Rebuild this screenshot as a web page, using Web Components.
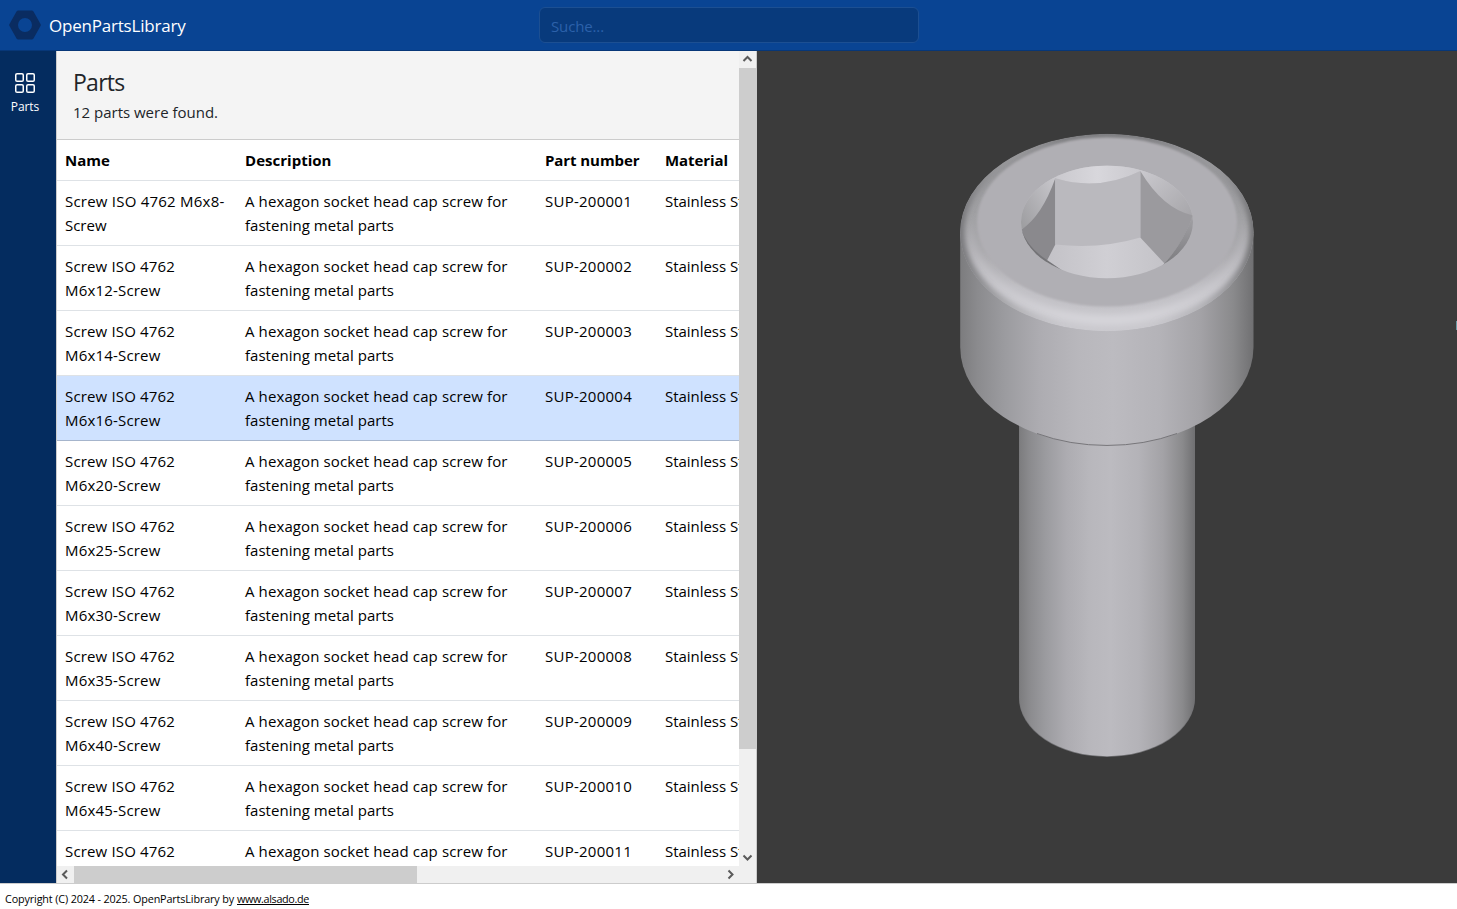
<!DOCTYPE html>
<html lang="en">
<head>
<meta charset="utf-8">
<title>OpenPartsLibrary</title>
<style>
html,body{margin:0;height:100%;overflow:hidden}
body{font-family:"Open Sans","Noto Sans",sans-serif;font-size:15px;line-height:24px;color:#000;background:#fff}
</style>
</head>
<body>
<opl-app></opl-app>
<script>
const define = (name, html, setup) => customElements.define(name, class extends HTMLElement {
  connectedCallback() {
    if (this.shadowRoot) return;
    this.attachShadow({mode: 'open'}).innerHTML = typeof html === 'function' ? html(this) : html;
    if (setup) setup(this);
  }
});

/* One line of text, tracked so that it is exactly `w` pixels wide. */
define('opl-line', '<style>:host{display:block;white-space:nowrap;width:max-content}span{display:inline-block;text-decoration:inherit}</style><span><slot></slot></span>', el => {
  const span = el.shadowRoot.querySelector('span');
  const n = el.textContent.length;
  const natural = span.getBoundingClientRect().width;
  span.style.letterSpacing = ((+el.getAttribute('w') - natural) / n).toFixed(3) + 'px';
});

define('opl-header', `<style>
:host{display:grid;grid-template-columns:539px 380px 1fr;align-items:center;height:51px;box-sizing:border-box;background:#094493;border-bottom:1px solid #073778;color:#fff}
.brand{display:flex;align-items:center;gap:8px;padding-left:9px;font-size:17px}
.brand opl-line{padding-top:2px}
svg{display:block}
.search{height:36px;box-sizing:border-box;border:1px solid #1c4f92;border-radius:6px;background:#083a7c;color:#2c61aa;padding:6px 11px 4px}
</style>
<div class="brand"><svg width="32" height="30" viewBox="0 0 32 30"><path fill="#0a2c61" fill-rule="evenodd" d="M9.3.6h13.4q1.2 0 1.8 1l7 12.4q.6 1 0 2l-7 12.4q-.6 1-1.8 1H9.3q-1.2 0-1.8-1L.5 16q-.6-1 0-2l7-12.4q.6-1 1.8-1zM16 8a7 7 0 1 0 0 14 7 7 0 0 0 0-14z"/></svg><opl-line w="136.5">OpenPartsLibrary</opl-line></div>
<div class="search"><opl-line w="53">Suche...</opl-line></div>`);

define('opl-nav', `<style>
:host{display:flex;flex-direction:column;align-items:center;background:#042c5f;color:#fff;padding:22px 6px 0 0;box-sizing:border-box;width:56px;font-size:12px;line-height:18px;gap:5px}
svg{display:block}
</style>
<svg width="20" height="20" viewBox="0 0 20 20" fill="none" stroke="#fff" stroke-width="1.5"><rect x=".75" y=".75" width="7.5" height="7.5" rx="1.3"/><rect x="11.75" y=".75" width="7.5" height="7.5" rx="1.3"/><rect x=".75" y="11.75" width="7.5" height="7.5" rx="1.3"/><rect x="11.75" y="11.75" width="7.5" height="7.5" rx="1.3"/></svg>
<opl-line w="28.5">Parts</opl-line>`);

define('opl-row', el => {
  const [a, wa, b, wb, num] = el.getAttribute('data').split('|');
  return `<style>
:host{display:grid;grid-template-columns:180px 300px 120px 150px;height:65px;box-sizing:border-box;border-bottom:1px solid #dee2e6;padding-top:8px;width:750px}
:host([selected]){background:#cfe2ff;border-bottom-color:#a6b5cc}
div{padding-left:8px}
</style>
<div><opl-line w="${wa}">${a}</opl-line><opl-line w="${wb}">${b}</opl-line></div>
<div><opl-line w="262.5">A hexagon socket head cap screw for</opl-line><opl-line w="149">fastening metal parts</opl-line></div>
<div><opl-line w="87">${num}</opl-line></div><div><opl-line w="99">Stainless Steel</opl-line></div>`;
});

define('opl-scrollbar', `<style>
:host{display:flex;background:#f0f0f0}
:host([vertical]){flex-direction:column}
.b{width:17px;height:17px;flex:none}
svg{display:block}
.t{background:#cdcdcd;flex:none}
.s{flex:1}
</style><div class="b"></div><div class="t"></div><div class="s"></div><div class="b"></div>`, el => {
  const v = el.hasAttribute('vertical'), r = el.shadowRoot;
  const t = r.querySelector('.t');
  t.style.width = v ? '17px' : el.getAttribute('thumb') + 'px';
  t.style.height = v ? el.getAttribute('thumb') + 'px' : '17px';
  const paths = v ? ['M4.5 10 8.5 6l4 4', 'M4.5 6.5l4 4 4-4'] : ['M10 4.5l-4 4 4 4', 'M6.500 4.500l4 4-4 4'];
  r.querySelectorAll('.b').forEach((b, i) => b.innerHTML = `<svg width="17" height="17" fill="none" stroke="#5a5a5a" stroke-width="2"><path d="${paths[i]}"/></svg>`);
});

define('opl-parts', el => {
  const sizes = ['8','12','14','16','20','25','30','35','40','45','50'];
  const rows = sizes.map((s, i) => {
    const num = 'SUP-2000' + String(i + 1).padStart(2, '0');
    const d = i === 0 ? `Screw ISO 4762 M6x8-|159.5|Screw|41.5|${num}` : `Screw ISO 4762|110|M6x${s}-Screw|95.5|${num}`;
    return `<opl-row data="${d}"${i === 3 ? ' selected' : ''}></opl-row>`;
  }).join('');
  return `<style>
:host{display:grid;grid-template-columns:682px 17px;grid-template-rows:815px 17px;border-left:1px solid #ccc;border-right:1px solid #ccc;box-sizing:border-box;width:701px;background:#f0f0f0}
.view{overflow:hidden;background:#fff;min-width:0}
.head{height:89px;box-sizing:border-box;background:#f4f4f4;border-bottom:1px solid #ccc;padding:16px 16px 0;color:#212529}
.title{font-size:23px;line-height:30px;margin-bottom:3px}
.cols{display:grid;grid-template-columns:180px 300px 120px 150px;width:750px;height:41px;box-sizing:border-box;padding-top:8px;border-bottom:1px solid #dee2e6;font-weight:700}
.cols opl-line{padding-left:8px}
</style>
<div class="view">
<div class="head"><div class="title"><opl-line w="51.500">Parts</opl-line></div><opl-line w="145">12 parts were found.</opl-line></div>
<div class="cols"><opl-line w="45">Name</opl-line><opl-line w="86.500">Description</opl-line><opl-line w="94.500">Part number</opl-line><opl-line w="63">Material</opl-line></div>
${rows}</div>
<opl-scrollbar vertical thumb="681"></opl-scrollbar>
<opl-scrollbar thumb="343"></opl-scrollbar>`;
});

define('opl-viewer', `<style>
:host{display:block;background:#3b3b3b;overflow:hidden}
svg{display:block}
</style>
<svg width="700" height="832" viewBox="757 51 700 832">
<defs>
<linearGradient id="cyl"><stop offset="0" stop-color="#7c7c7e"/><stop offset=".06" stop-color="#8b8b8e"/><stop offset=".15" stop-color="#9b9b9f"/><stop offset=".27" stop-color="#adacb1"/><stop offset=".4" stop-color="#b8b7bc"/><stop offset=".52" stop-color="#bcbbc0"/><stop offset=".68" stop-color="#b4b3b8"/><stop offset=".82" stop-color="#a3a2a6"/><stop offset=".93" stop-color="#8a8a8c"/><stop offset="1" stop-color="#707072"/></linearGradient>
<linearGradient id="bev" x1="0" y1="0" x2="0" y2="1"><stop offset="0" stop-color="#7f7f82"/><stop offset=".2" stop-color="#98989b"/><stop offset=".45" stop-color="#a2a2a5"/><stop offset=".6" stop-color="#abaaae"/><stop offset=".78" stop-color="#c0bfc4"/><stop offset="1" stop-color="#cac9ce"/></linearGradient>
<linearGradient id="edge" gradientUnits="userSpaceOnUse" x1="960" y1="0" x2="1254" y2="0"><stop offset="0" stop-color="#78787b"/><stop offset=".06" stop-color="#88888b" stop-opacity=".9"/><stop offset=".2" stop-color="#a2a2a5" stop-opacity=".5"/><stop offset=".35" stop-color="#b0afb4" stop-opacity="0"/><stop offset=".65" stop-color="#b0afb4" stop-opacity="0"/><stop offset=".82" stop-color="#a2a2a5" stop-opacity=".5"/><stop offset=".94" stop-color="#88888b" stop-opacity=".9"/><stop offset="1" stop-color="#727274"/></linearGradient>
<linearGradient id="hi" gradientUnits="userSpaceOnUse" x1="0" y1="215" x2="0" y2="325"><stop offset="0" stop-color="#b8b7bc" stop-opacity="0"/><stop offset=".5" stop-color="#c4c3c8" stop-opacity=".8"/><stop offset="1" stop-color="#d9d8dd"/></linearGradient>
<linearGradient id="floor"><stop offset="0" stop-color="#bdbcc1"/><stop offset=".5" stop-color="#d0cfd4"/><stop offset="1" stop-color="#bebdc2"/></linearGradient>
<linearGradient id="back"><stop offset="0" stop-color="#c8c7cc"/><stop offset=".5" stop-color="#d8d7dc"/><stop offset="1" stop-color="#c8c7cc"/></linearGradient>
<linearGradient id="lc" x1="1" y1="0" x2="0" y2="1"><stop offset="0" stop-color="#cfced3"/><stop offset="1" stop-color="#98989b"/></linearGradient>
<linearGradient id="rc" x1="0" y1="0" x2="1" y2="1"><stop offset="0" stop-color="#cecdd2"/><stop offset="1" stop-color="#a4a3a7"/></linearGradient>
<linearGradient id="rs" x1="0" y1="0" x2="0" y2="1"><stop offset="0" stop-color="#a3a2a6"/><stop offset="1" stop-color="#707073"/></linearGradient>
<filter id="b1" x="-10%" y="-10%" width="120%" height="120%"><feGaussianBlur stdDeviation="1.2"/></filter>
<filter id="b2" x="-10%" y="-10%" width="120%" height="120%"><feGaussianBlur stdDeviation="2.5"/></filter>
<filter id="b3" x="-10%" y="-10%" width="120%" height="120%"><feGaussianBlur stdDeviation="3.5"/></filter>
<clipPath id="top"><ellipse cx="1106.850" cy="232.500" rx="146.700" ry="98.700"/></clipPath>
<clipPath id="sock"><ellipse cx="1107" cy="222" rx="86" ry="56.300"/></clipPath>
</defs>
<path d="M1019 400V698A88 59 0 0 0 1195 698V400Z" fill="#727275"/>
<path d="M1019.300 400V697.300A87.700 59 0 0 0 1194.700 697.300V400Z" fill="url(#cyl)"/>
<path d="M960.200 234V347A146.650 98.500 0 0 0 1253.500 347V234Z" fill="url(#cyl)"/>
<path d="M1037 433.500A146.650 98.500 0 0 0 1177 433.500" fill="none" stroke="#77767a" stroke-width="1"/>
<g clip-path="url(#top)">
<ellipse cx="1107" cy="232.500" rx="147" ry="98.700" fill="url(#bev)"/>
<ellipse cx="1107" cy="229" rx="138" ry="91" fill="none" stroke="url(#hi)" stroke-width="10" filter="url(#b3)"/>
<ellipse cx="1107" cy="232.500" rx="147" ry="98.700" fill="none" stroke="url(#edge)" stroke-width="9" filter="url(#b2)"/>
<ellipse cx="1107" cy="222" rx="130" ry="84.500" fill="#b0afb4" filter="url(#b1)"/>
</g>
<g clip-path="url(#sock)">
<rect x="1020" y="165" width="174" height="115" fill="url(#floor)"/>
<path d="M1050 165H1145L1140.300 171Q1099 191.500 1055.300 178.300Z" fill="url(#back)"/>
<path d="M1055.300 178.300L1050 160L1015 175V229H1022Q1042 220 1055.300 178.300Z" fill="url(#lc)"/>
<path d="M1055.300 178.300V244.500L1047 260.500L1040 275L1015 250L1021.500 229.500Q1042 216 1055.300 178.300Z" fill="#8a898d"/>
<path d="M1021 229Q1028 248 1047 260L1063 271L1050 280L1015 250Z" fill="#747477"/>
<path d="M1140.300 171L1150 160H1200V216H1192Q1160 209 1140.300 171Z" fill="url(#rc)"/>
<path d="M1140.300 171V237.500L1164.500 263.500Q1184 242 1193 215.500Q1163 209 1140.300 171Z" fill="#9b9a9e"/>
<path d="M1192.500 215.500Q1183 244 1162 266L1180 280L1200 250V215Z" fill="url(#rs)"/>
<path d="M1055.300 178.300Q1099 191.500 1140.300 171V237.500Q1100 249.500 1055.300 244.500Z" fill="#bab9be"/>
</g>
<rect x="1456" y="321" width="1" height="9" fill="#6b9aa5"/>
</svg>`);

define('opl-footer', `<style>
:host{display:flex;align-items:center;gap:3px;height:26px;box-sizing:border-box;border-top:1px solid #ccc;padding:4px 5px 0;font-size:10.8px;line-height:18px;background:#fff;color:#000}
.link{text-decoration:underline}
</style><opl-line w="229">Copyright (C) 2024 - 2025. OpenPartsLibrary by</opl-line><opl-line class="link" w="72">www.alsado.de</opl-line>`);

define('opl-app', `<style>
:host{display:flex;flex-direction:column;width:1457px;height:909px}
main{display:grid;grid-template-columns:56px 701px 1fr;height:832px}
</style><opl-header></opl-header><main><opl-nav></opl-nav><opl-parts></opl-parts><opl-viewer></opl-viewer></main><opl-footer></opl-footer>`);
</script>
</body>
</html>
